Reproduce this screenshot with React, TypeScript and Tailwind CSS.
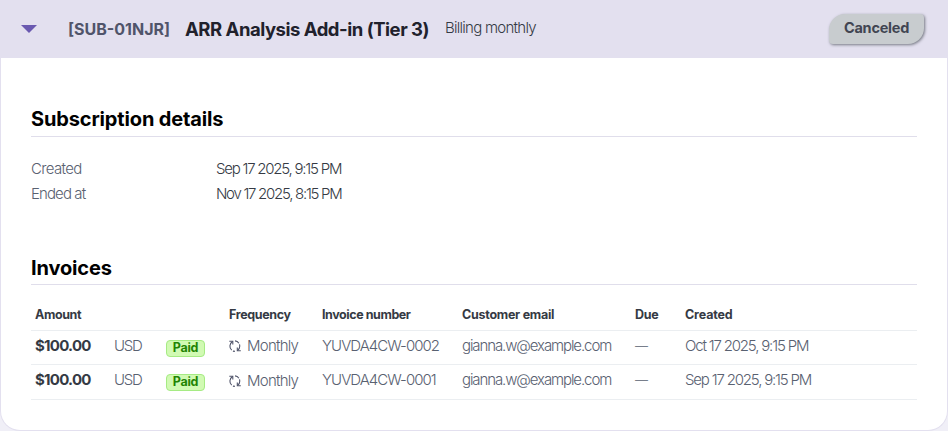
const invoices = [
  { number: 'YUVDA4CW-0002', created: 'Oct 17 2025, 9:15 PM', row: 'h-[34px] pb-[3px]', shift: '' },
  { number: 'YUVDA4CW-0001', created: 'Sep 17 2025, 9:15 PM', row: 'h-[35px] pb-[4px]', shift: 'pt-px' },
];

const columns = 'grid grid-cols-[79px_52px_63px_93px_140px_173px_50px_1fr] items-center pl-1';

function SyncIcon() {
  return (
    <svg width="12" height="12" viewBox="0 0 12 12" fill="none" stroke="#50546a" strokeWidth="1.1" className="shrink-0">
      <path d="M0.3 1.2h3.5v3.3" />
      <path d="M3.5 1.5C0.4 3.6 0 7.7 2.7 10.2" />
      <path d="M6 0.9c1.6 0.1 3 0.9 3.9 2.3M10.5 4.4c0.6 2.2 0 4.4-1.8 6" />
      <path d="M11.8 10.8H8.3V7.5" />
      <path d="M3.9 11.1l2 .3" />
    </svg>
  );
}

function SectionTitle({ children, offset }: { children: string; offset: string }) {
  return (
    <h2 className={`h-[30px] border-b border-[#e0deeb] text-[20px] leading-6 font-bold tracking-[-0.14px] text-black ${offset}`}>
      {children}
    </h2>
  );
}

export default function App() {
  return (
    <div className="h-[431px] w-[948px] overflow-hidden bg-[#f0eff7] font-['Inter','Liberation_Sans',sans-serif] whitespace-nowrap">
      <div className="h-[431px] overflow-hidden rounded-b-[20px] border-x border-b border-[#e3e0ef] bg-white">
        <header className="flex h-[58px] items-center bg-[#e3e0ef] pr-[23px] pl-5">
          <svg width="16" height="8" viewBox="0 0 16 8" className="shrink-0">
            <path d="M0 0h16L8 8z" fill="#6a59b0" />
          </svg>
          <span className="ml-[31px] w-[117px] text-[16px] leading-6 font-bold text-[#50546a]">[SUB-01NJR]</span>
          <h1 className="w-[260px] text-[18.5px] leading-6 font-bold tracking-[-0.48px] text-[#21212c]">ARR Analysis Add-in (Tier 3)</h1>
          <span className="pb-[2px] text-[15px] leading-5 font-light tracking-[-0.73px] text-[#353a44]">Billing monthly</span>
          <span className="ml-auto flex h-[30px] w-[95px] items-center justify-center rounded-[16px_4px_16px_4px] bg-[#c8cccf] pb-[2px] text-[14.5px] font-bold tracking-[-0.25px] text-[#414552] shadow-[1px_1px_3px_#777a85]">Canceled</span>
        </header>
        <main className="px-[30px]">
          <section className="pt-[49px]">
            <SectionTitle offset="">Subscription details</SectionTitle>
            <dl className="grid grid-cols-[185px_1fr] pt-[19px] text-[15px] leading-[25px] font-light">
              <dt className="tracking-[-0.65px] text-[#596171]">Created</dt>
              <dd className="tracking-[-1.23px] text-[#353a44]">Sep 17 2025, 9:15 PM</dd>
              <dt className="tracking-[-0.9px] text-[#596171]">Ended at</dt>
              <dd className="tracking-[-1.28px] text-[#353a44]">Nov 17 2025, 8:15 PM</dd>
            </dl>
          </section>
          <section className="pt-[49px]">
            <SectionTitle offset="pt-px">Invoices</SectionTitle>
            <div className={`${columns} mt-[14px] h-[32px] border-b border-[#ebeef1] pt-px text-[12.5px] font-bold text-[#353a44]`}>
              <span className="col-span-3 tracking-[-0.4px]">Amount</span>
              <span className="tracking-[-0.35px]">Frequency</span>
              <span className="tracking-[-0.43px]">Invoice number</span>
              <span className="tracking-[-0.27px]">Customer email</span>
              <span className="tracking-[-0.3px]">Due</span>
              <span className="tracking-[-0.15px]">Created</span>
            </div>
            {invoices.map((invoice) => (
              <div key={invoice.number} className={`${columns} ${invoice.row} border-b border-[#ebeef1] text-[15px] leading-5 font-light text-[#596171]`}>
                <span className="font-bold tracking-[-0.75px] text-[#353a44]">$100.00</span>
                <span className="tracking-[-1.3px]">USD</span>
                <span className="mt-1 flex h-[17px] w-[39px] items-center justify-center rounded-[4px] border border-[#a6eb84] bg-[#d1fab3] text-[12.5px] font-bold tracking-[-0.3px] text-[#228403]">Paid</span>
                <span className={`flex items-center gap-[6px] ${invoice.shift} tracking-[-0.75px]`}><SyncIcon />Monthly</span>
                <span className="tracking-[-0.95px]">{invoice.number}</span>
                <span className="tracking-[-1.1px]">gianna.w@example.com</span>
                <span className="text-[13px]">—</span>
                <span className="tracking-[-1.18px]">{invoice.created}</span>
              </div>
            ))}
          </section>
        </main>
      </div>
    </div>
  );
}
